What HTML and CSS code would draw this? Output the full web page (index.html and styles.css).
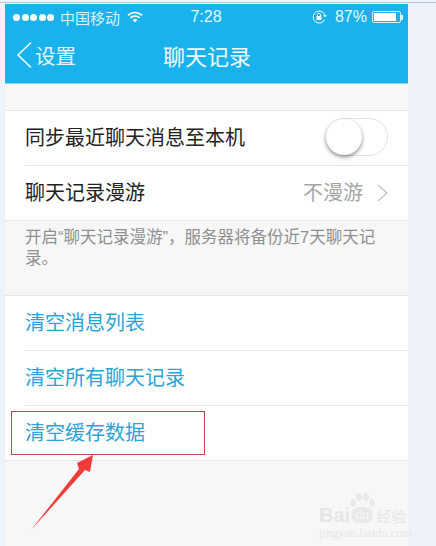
FILE: index.html
```html
<!DOCTYPE html>
<html lang="zh-CN">
<head>
    <title>聊天记录</title>
    <meta http-equiv="Content-Type" content="text/html; charset=utf-8" />
    <link rel="stylesheet" href="styles.css">
</head>
<body>
<div class="top-line"></div>
<div class="phone">
    <div class="nav">
        <div class="status-bar">
            <div class="status-left">
                <div class="dots"><i></i><i></i><i></i><i></i><i></i></div>
                <span class="carrier">中国移动</span>
                <svg class="wifi" width="16" height="12" viewBox="0 0 16 12">
                    <path d="M1 4.4a10 10 0 0 1 14 0M3.4 6.9a6.6 6.6 0 0 1 9.2 0" fill="none" stroke="#fff" stroke-width="1.6"/>
                    <path d="M5.7 9a3.2 3.2 0 0 1 4.6 0L8 11.4z" fill="#fff"/>
                </svg>
            </div>
            <div class="clock">7:28</div>
            <div class="status-right">
                <svg class="lock" width="16" height="14" viewBox="0 0 16 14">
                    <path d="M12.6 9.6A6 6 0 1 1 12.8 5" fill="none" stroke="#fff" stroke-width="1"/>
                    <path d="M11 5.2h4l-2 2z" fill="#fff"/>
                    <rect x="4.5" y="6" width="5" height="4" fill="#fff"/>
                    <path d="M5.5 6V4.8a1.5 1.5 0 0 1 3 0V6" fill="none" stroke="#fff"/>
                </svg>
                <span class="percent">87%</span>
                <div class="battery"><div class="battery-fill"></div></div>
                <div class="battery-tip"></div>
            </div>
        </div>
        <div class="title-bar">
            <div class="back">
                <svg width="16" height="28" viewBox="0 0 16 28">
                    <path d="M15 1.5L2 14l13 12.5" fill="none" stroke="#fff" stroke-width="1.5"/>
                </svg>
                <span>设置</span>
            </div>
            <div class="title">聊天记录</div>
        </div>
    </div>

    <div class="group group-first">
        <div class="row row-line">
            <span class="row-name">同步最近聊天消息至本机</span>
            <div class="switch"><div class="knob"></div></div>
        </div>
        <div class="row">
            <span class="row-name">聊天记录漫游</span>
            <div class="row-value">
                <span>不漫游</span>
                <svg width="11" height="18" viewBox="0 0 11 18">
                    <path d="M1 1l9 8-9 8" fill="none" stroke="#c4c4c4" stroke-width="1.5"/>
                </svg>
            </div>
        </div>
    </div>

    <div class="note">开启“聊天记录漫游”，服务器将备份近7天聊天记录。</div>

    <div class="group">
        <div class="row row-line"><span class="row-link">清空消息列表</span></div>
        <div class="row row-line"><span class="row-link">清空所有聊天记录</span></div>
        <div class="row"><span class="row-link">清空缓存数据</span></div>
    </div>

    <div class="watermark">
        <svg class="paw" width="28" height="22" viewBox="0 0 28 22">
            <ellipse cx="5" cy="11" rx="3" ry="4" fill="#e9e9e9"/>
            <ellipse cx="11" cy="5" rx="3" ry="4" fill="#e9e9e9"/>
            <ellipse cx="18" cy="5" rx="3" ry="4" fill="#e9e9e9"/>
            <ellipse cx="24" cy="11" rx="3" ry="4" fill="#e9e9e9"/>
        </svg>
        <div class="wm-top"><b>Bai</b><span class="wm-du">du</span><span class="wm-cn">经验</span></div>
        <div class="wm-url">jingyan.baidu.com</div>
    </div>
</div>

<!-- красная рамка и стрелка поверх скриншота -->
<div class="red-box"></div>
<svg class="arrow" width="70" height="80" viewBox="0 0 70 80">
    <path d="M2 77L50 16 48 10 64 2 61 19 56 17z" fill="#f4393a"/>
</svg>
</body>
</html>
```

FILE: styles.css
```css
html, body {margin: 0; height: 100%; overflow: hidden;}
body{
    background: #eef2fa;
    font-family: "Noto Sans CJK SC", "Liberation Sans", sans-serif;
    position: relative;
}
.top-line{
    height: 1px;
    margin-top: 2px;
    margin-bottom: 1px;
    background: #b9c6da;
}
.phone{
    position: relative;
    width: 403px;
    height: 542px;
    margin-left: 5px;
    background: #f7f7f7;
}
.nav{
    height: 80px;
    background: #1ab2ec;
    border-bottom: 1px solid #7fd0f2;
    box-sizing: border-box;
    color: white;
}
.status-bar{
    display: grid;
    grid-template-columns: 1fr auto 1fr;
    align-items: center;
    height: 26px;
    padding: 0 5px 0 8px;
}
.status-left{
    display: flex;
    align-items: center;
}
.dots{
    display: flex;
    gap: 1.5px;
    margin-right: 6px;
}
.dots i{
    display: block;
    width: 7px;
    height: 7px;
    border-radius: 50%;
    background: white;
}
.carrier{
    font-size: 15px;
    color: #d9f2fc;
    margin-right: 7px;
}
.clock{
    font-family: "Liberation Sans", sans-serif;
    font-size: 16px;
    margin-right: 4px;
    color: #e8f8fe;
}
.status-right{
    display: flex;
    align-items: center;
    justify-content: flex-end;
}
.lock{
    margin-right: 7px;
}
.percent{
    font-family: "Liberation Sans", sans-serif;
    font-size: 16px;
    margin-right: 5px;
    color: #e8f8fe;
}
.battery{
    width: 29px;
    height: 12px;
    padding: 1px 4px 1px 1px;
    border: 1px solid #d9f2fc;
    border-radius: 2px;
    box-sizing: border-box;
}
.battery-fill{
    height: 100%;
    background: white;
}
.battery-tip{
    width: 2px;
    height: 5px;
    background: #d9f2fc;
}
.title-bar{
    position: relative;
    display: flex;
    align-items: center;
    justify-content: center;
    height: 53px;
}
.back{
    position: absolute;
    left: 11px;
    top: 10px;
    display: flex;
    align-items: center;
    gap: 3px;
    font-size: 20.5px;
    color: #e3f6fd;
}
.title{
    font-size: 22px;
    padding-bottom: 4px;
    margin-left: 1px;
    color: #f2fbff;
}
.group{
    background: white;
    border-top: 1px solid #e6e6e6;
    border-bottom: 1px solid #e6e6e6;
}
.group-first{
    margin-top: 26px;
}
.row{
    display: flex;
    align-items: center;
    justify-content: space-between;
    height: 54px;
    box-sizing: content-box;
    margin-left: 20px;
    padding-right: 20px;
    font-size: 20px;
}
.row span{
    margin-bottom: 3px;
}
.row-line{
    border-bottom: 1px solid #e6e6e6;
}
.row-name{
    color: #222;
}
.row-link{
    color: #2ba3d8;
}
.row-value{
    display: flex;
    align-items: center;
    gap: 14px;
    color: #a5a5a5;
}
.switch{
    position: relative;
    width: 62px;
    height: 38px;
    margin-bottom: 2px;
    border: 1px solid #e3e3e3;
    border-radius: 20px;
    box-sizing: border-box;
    background: white;
}
.knob{
    position: absolute;
    left: -1px;
    top: 0;
    width: 36px;
    height: 36px;
    border-radius: 50%;
    background: white;
    box-shadow: 0 2px 4px rgba(0, 0, 0, 0.45);
}
.note{
    height: 74px;
    box-sizing: border-box;
    padding: 6px 18px 0 20px;
    font-family: "Liberation Sans", "Noto Sans CJK SC", sans-serif;
    font-size: 16.5px;
    line-height: 21px;
    color: #8f8f8f;
}
.watermark{
    position: absolute;
    left: 314px;
    top: 488px;
    color: #e6e6e6;
    font-family: "Liberation Sans", sans-serif;
}
.paw{
    position: absolute;
    left: 29px;
    top: 0;
}
.wm-top{
    display: flex;
    align-items: center;
    margin-top: 12px;
    height: 22px;
    font-size: 20px;
}
.wm-du{
    width: 22px;
    height: 16px;
    margin-left: 1px;
    border-radius: 8px;
    background: #e9e9e9;
    color: #f7f7f7;
    font-size: 12px;
    line-height: 16px;
    text-align: center;
}
.wm-cn{
    margin-left: 3px;
    font-size: 15px;
    font-family: "Noto Sans CJK SC", sans-serif;
}
.wm-url{
    font-family: "Liberation Serif", serif;
    font-size: 12.5px;
    white-space: nowrap;
}
.red-box{
    position: absolute;
    left: 11px;
    top: 411px;
    width: 192px;
    height: 42px;
    border: 1px solid #c8454a;
}
.arrow{
    position: absolute;
    left: 29px;
    top: 453px;
}
```
